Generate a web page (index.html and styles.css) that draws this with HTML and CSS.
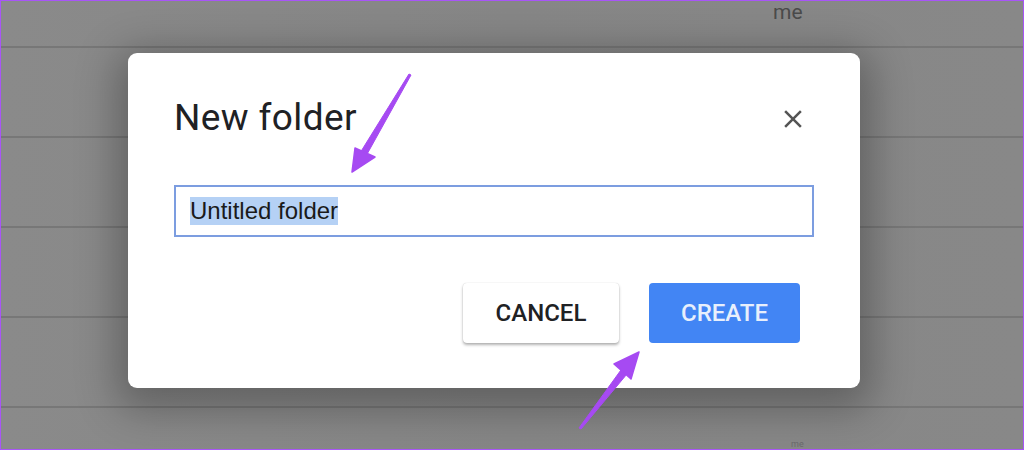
FILE: index.html
```html
<!DOCTYPE html>
<html>
<head>
<meta charset="utf-8">
<link rel="stylesheet" href="styles.css">
</head>
<body>
<div class="frame">
  <div class="list">
    <div class="row first"><span class="cell">me</span></div>
    <div class="row"></div>
    <div class="row"></div>
    <div class="row"></div>
    <div class="row"></div>
    <div class="row last"><span class="cell low">me</span></div>
  </div>

  <div class="dialog">
    <div class="head">
      <h1 class="title">New folder</h1>
    </div>
    <div class="field"><span class="sel">Untitled folder</span></div>
    <div class="actions">
      <button class="btn cancel">CANCEL</button>
      <button class="btn create">CREATE</button>
    </div>
  </div>

  <svg class="close" viewBox="0 0 24 24" width="30" height="30"><path d="M19 6.41L17.59 5 12 10.59 6.41 5 5 6.41 10.59 12 5 17.59 6.41 19 12 13.41 17.59 19 19 17.59 13.41 12z" fill="#545454"/></svg>

  <svg class="arrows" viewBox="0 0 1024 450" width="1024" height="450">
    <g fill="#a64af2" stroke="#a64af2">
      <polygon points="409,74 411,75 366,156 360,153" stroke-width="1" stroke-linejoin="round"/>
      <polygon points="352,172 355,148 375,157" stroke-width="1.5" stroke-linejoin="round"/>
      <polygon points="579,428 581,429 632,368 626,363" stroke-width="1" stroke-linejoin="round"/>
      <polygon points="639,352 614,364 631,379" stroke-width="1.5" stroke-linejoin="round"/>
    </g>
  </svg>
</div>
</body>
</html>
```
FILE: styles.css
```css
html, body {
  margin: 0;
  padding: 0;
}
body {
  width: 1024px;
  height: 450px;
  overflow: hidden;
  background: #878787;
  font-family: Roboto, "Liberation Sans", sans-serif;
}
.frame {
  position: relative;
  width: 1024px;
  height: 450px;
  box-sizing: border-box;
  border: 1px solid #a855f7;
  overflow: hidden;
  background: linear-gradient(90deg, #8a8a8a 0%, #868686 50%, #888 100%);
}
.list {
  display: flex;
  flex-direction: column;
}
.row {
  height: 88px;
  border-bottom: 2px solid #777;
  position: relative;
}
.row.first {
  height: 45px;
}
.cell {
  position: absolute;
  left: 772px;
  top: 0;
  font-size: 21px;
  line-height: 22px;
  color: #4b4b4b;
}
.cell.low {
  top: 31px;
  left: 790px;
  font-size: 9px;
  line-height: 10px;
  color: #6a6a6a;
}
.dialog {
  position: absolute;
  left: 127px;
  top: 52px;
  width: 732px;
  height: 335px;
  box-sizing: border-box;
  background: #fff;
  border-radius: 9px;
  padding: 45px 46px 45px 46px;
  box-shadow: 0 10px 40px 12px rgba(0,0,0,0.28);
  display: flex;
  flex-direction: column;
}
.head {
  height: 40px;
  display: flex;
  align-items: center;
}
.title {
  margin: 0;
  font-family: Roboto, "Open Sans", sans-serif;
  font-weight: 400;
  font-size: 37px;
  line-height: 40px;
  color: #202124;
  letter-spacing: 0.4px;
}
.field {
  margin-top: 47px;
  height: 52px;
  box-sizing: border-box;
  border: 2px solid #7c9de0;
  padding-left: 14px;
  display: flex;
  align-items: center;
  font-family: "Liberation Sans", Arial, sans-serif;
  font-size: 24px;
  color: #1a1a1a;
}
.sel {
  background: #b5d1f5;
  line-height: 28px;
}
.actions {
  margin-top: 46px;
  display: flex;
  justify-content: flex-end;
  gap: 30px;
  padding-right: 14px;
}
.btn {
  font-family: Roboto, sans-serif;
  font-weight: 500;
  font-size: 24px;
  border: none;
  border-radius: 4px;
  height: 60px;
  padding: 0;
  cursor: pointer;
}
.cancel {
  width: 156px;
  background: #fff;
  color: #202124;
  box-shadow: 0 2px 3px rgba(0,0,0,0.3), 0 0 1px rgba(0,0,0,0.2);
}
.create {
  width: 151px;
  background: #4285f4;
  color: #e8effc;
}
.close {
  position: absolute;
  left: 777px;
  top: 103px;
}
.arrows {
  position: absolute;
  left: -1px;
  top: -1px;
  pointer-events: none;
}
```
